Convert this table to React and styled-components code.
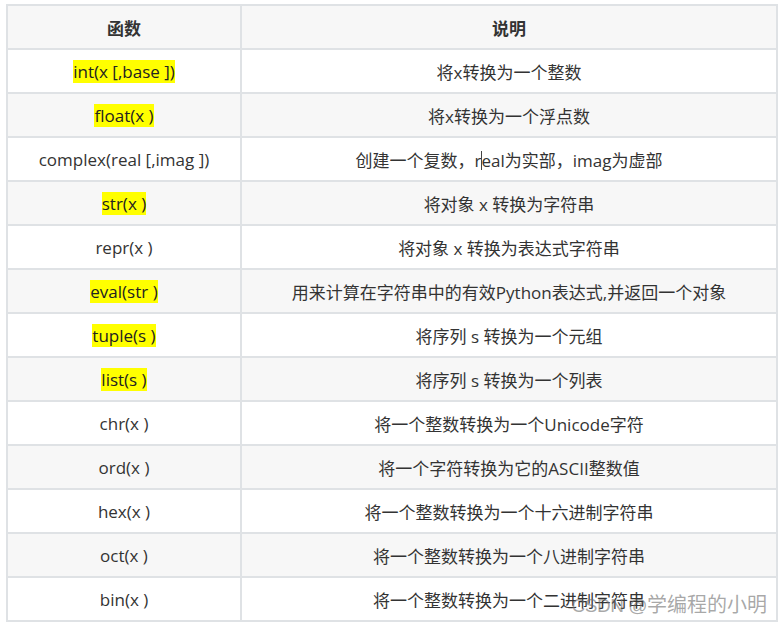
import styled, { createGlobalStyle } from 'styled-components';

const GlobalStyle = createGlobalStyle`
  body {
    margin: 0;
    background: #ffffff;
  }
`;

const rows = [
  { fn: 'int(x [,base ])', desc: '将x转换为一个整数', mark: true },
  { fn: 'float(x )', desc: '将x转换为一个浮点数', mark: true },
  { fn: 'complex(real [,imag ])', desc: 'complex' },
  { fn: 'str(x )', desc: '将对象 x 转换为字符串', mark: true },
  { fn: 'repr(x )', desc: '将对象 x 转换为表达式字符串' },
  { fn: 'eval(str )', desc: '用来计算在字符串中的有效Python表达式,并返回一个对象', mark: true },
  { fn: 'tuple(s )', desc: '将序列 s 转换为一个元组', mark: true },
  { fn: 'list(s )', desc: '将序列 s 转换为一个列表', mark: true },
  { fn: 'chr(x )', desc: '将一个整数转换为一个Unicode字符' },
  { fn: 'ord(x )', desc: '将一个字符转换为它的ASCII整数值' },
  { fn: 'hex(x )', desc: '将一个整数转换为一个十六进制字符串' },
  { fn: 'oct(x )', desc: '将一个整数转换为一个八进制字符串' },
  { fn: 'bin(x )', desc: '将一个整数转换为一个二进制字符串' },
];

const Page = styled.div`
  position: relative;
  padding: 4px 4px 0 6px;
  font-family: 'Open Sans', 'Noto Sans CJK SC', sans-serif;
  font-size: 17px;
  color: #333333;
`;

const Table = styled.table`
  width: 772px;
  border-collapse: collapse;
  border: 2px solid #dfe2e5;
`;

const Row = styled.tr`
  background: ${p => (p.$shade ? '#f7f7f7' : '#ffffff')};
`;

const HeadCell = styled.th`
  height: 42px;
  padding: 0;
  border: 2px solid #dfe2e5;
  font-weight: 700;
  text-align: center;
  width: ${p => p.$w || 'auto'};
`;

const Cell = styled.td`
  height: 42px;
  padding: 0;
  border: 2px solid #dfe2e5;
  text-align: center;
  vertical-align: middle;
`;

const Mark = styled.span`
  background: #ffff00;
  color: #222222;
`;

const Caret = styled.span`
  display: inline-block;
  width: 0;
  height: 19px;
  border-left: 1px solid #444444;
  vertical-align: -3px;
  margin-right: -1px;
`;

const Watermark = styled.div`
  position: absolute;
  right: 15px;
  bottom: 4px;
  font-family: 'Noto Sans CJK SC', sans-serif;
  font-size: 20px;
  color: rgba(110, 110, 110, 0.6);
  pointer-events: none;
`;

const WatermarkLatin = styled.span`
  font-family: 'Liberation Sans', sans-serif;
  font-size: 19px;
  letter-spacing: -0.5px;
`;

export default function App() {
  return (
    <>
      <GlobalStyle />
      <Page>
        <Table>
          <thead>
            <Row $shade>
              <HeadCell $w="232px">函数</HeadCell>
              <HeadCell>说明</HeadCell>
            </Row>
          </thead>
          <tbody>
            {rows.map((r, i) => (
              <Row key={r.fn} $shade={i % 2 === 1}>
                <Cell>{r.mark ? <Mark>{r.fn}</Mark> : r.fn}</Cell>
                <Cell>
                  {r.desc === 'complex' ? (
                    <>创建一个复数，r<Caret />eal为实部，imag为虚部</>
                  ) : (
                    r.desc
                  )}
                </Cell>
              </Row>
            ))}
          </tbody>
        </Table>
        <Watermark>
          <WatermarkLatin>CSDN @</WatermarkLatin>学编程的小明
        </Watermark>
      </Page>
    </>
  );
}
